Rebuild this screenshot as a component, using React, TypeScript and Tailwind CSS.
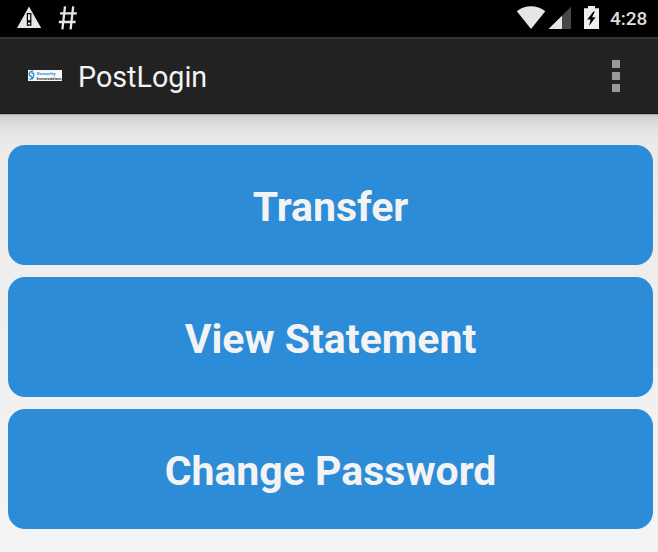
import React from "react";

function StatusBar() {
  return (
    <div className="flex h-[37px] shrink-0 justify-between bg-black">
      <svg width="90" height="37" viewBox="0 0 90 37" fill="#e6e6e6">
        <path fillRule="evenodd" d="M29 6.5 41.2 28H17L29 6.5Zm-2.2 6.4v12.9h4.6V12.9h-4.6Z" />
        <path d="M28 14.2h2.2v6H28zM28 22.4h2.2v2.2H28z" />
        <path d="M65 6.3 62.4 29.3M73.2 6.3 70.6 29.3M60 13.3h16.8M58.8 22h16.8" fill="none" stroke="#e6e6e6" strokeWidth="2.3" />
      </svg>
      <div className="flex">
        <svg width="100" height="37" viewBox="507 0 100 37">
          <path d="M531 29 516.8 11.3C525 4.6 537 4.6 545.3 11.3Z" fill="#e6e6e6" />
          <path d="M571 6.8V29h-22.4Z" fill="#484848" />
          <path d="M562 15.7V29h-13.4Z" fill="#e6e6e6" />
          <path fillRule="evenodd" d="M584 8.2h4V6h7v2.2h4V29h-15Zm9.4 3.2-6.2 8.2h3.4l-1.6 6.4 6.6-8.7h-3.5l2.8-5.9Z" fill="#eee" />
        </svg>
        <span className="w-[51px] pl-[3px] text-[19px] leading-[37px] font-medium text-[#dedede]">4:28</span>
      </div>
    </div>
  );
}

function Logo() {
  return (
    <svg width="34" height="11" viewBox="0 0 34 11" className="mb-px shrink-0">
      <rect width="34" height="11" fill="#f5f7f8" />
      <path d="M5.3 1.2C2.4.8 1 2.6 1.2 4.6c.3 2.2 3.2 1 2.8 3.2-.2 1-1.3 1.6-2.6 1.2M3.3 3.1c2.3-.6 3 1.2 2.3 2.9-.6 1.6-.3 2.2-1.8 3.3" fill="none" stroke="#2789c8" strokeWidth="1.3" />
      <text x="8.5" y="4.5" fontSize="4.4" fontWeight="700" fill="#3094d8" textLength="19" lengthAdjust="spacingAndGlyphs">Security</text>
      <text x="8.5" y="9.7" fontSize="4.4" fontWeight="700" fill="#484848" textLength="25" lengthAdjust="spacingAndGlyphs">Innovation</text>
    </svg>
  );
}

function ActionBar() {
  return (
    <header className="flex h-[77px] shrink-0 items-center border-t-2 border-b border-t-[#343434] border-b-[#111] bg-[#222] pr-[38px] pl-7">
      <Logo />
      <h1 className="ml-4 pt-px text-[28.7px] leading-9 text-[#f3f3f3]">PostLogin</h1>
      <div className="ml-auto flex flex-col gap-1">
        <i className="h-2 w-2 bg-[#999]" />
        <i className="h-2 w-2 bg-[#999]" />
        <i className="h-2 w-2 bg-[#999]" />
      </div>
    </header>
  );
}

export default function App() {
  return (
    <div className="flex h-[552px] w-[658px] flex-col overflow-hidden bg-black font-['Roboto',sans-serif]">
      <StatusBar />
      <ActionBar />
      <main className="flex flex-1 flex-col gap-3 bg-[linear-gradient(#a8a8a8_0px,#d0d0d0_2px,#dcdcdc_9px,#e7e7e7_20px,#ebebeb_32px,#f4f4f4_100%)] pt-[31px] pr-[5px] pl-2">
        {["Transfer", "View Statement", "Change Password"].map((label) => (
          <button
            key={label}
            className="h-[120px] rounded-[17px] bg-[#2c8cd7] pt-[3px] text-[41px] leading-[48px] font-bold text-[#f3f3f3]"
          >
            {label}
          </button>
        ))}
      </main>
    </div>
  );
}
